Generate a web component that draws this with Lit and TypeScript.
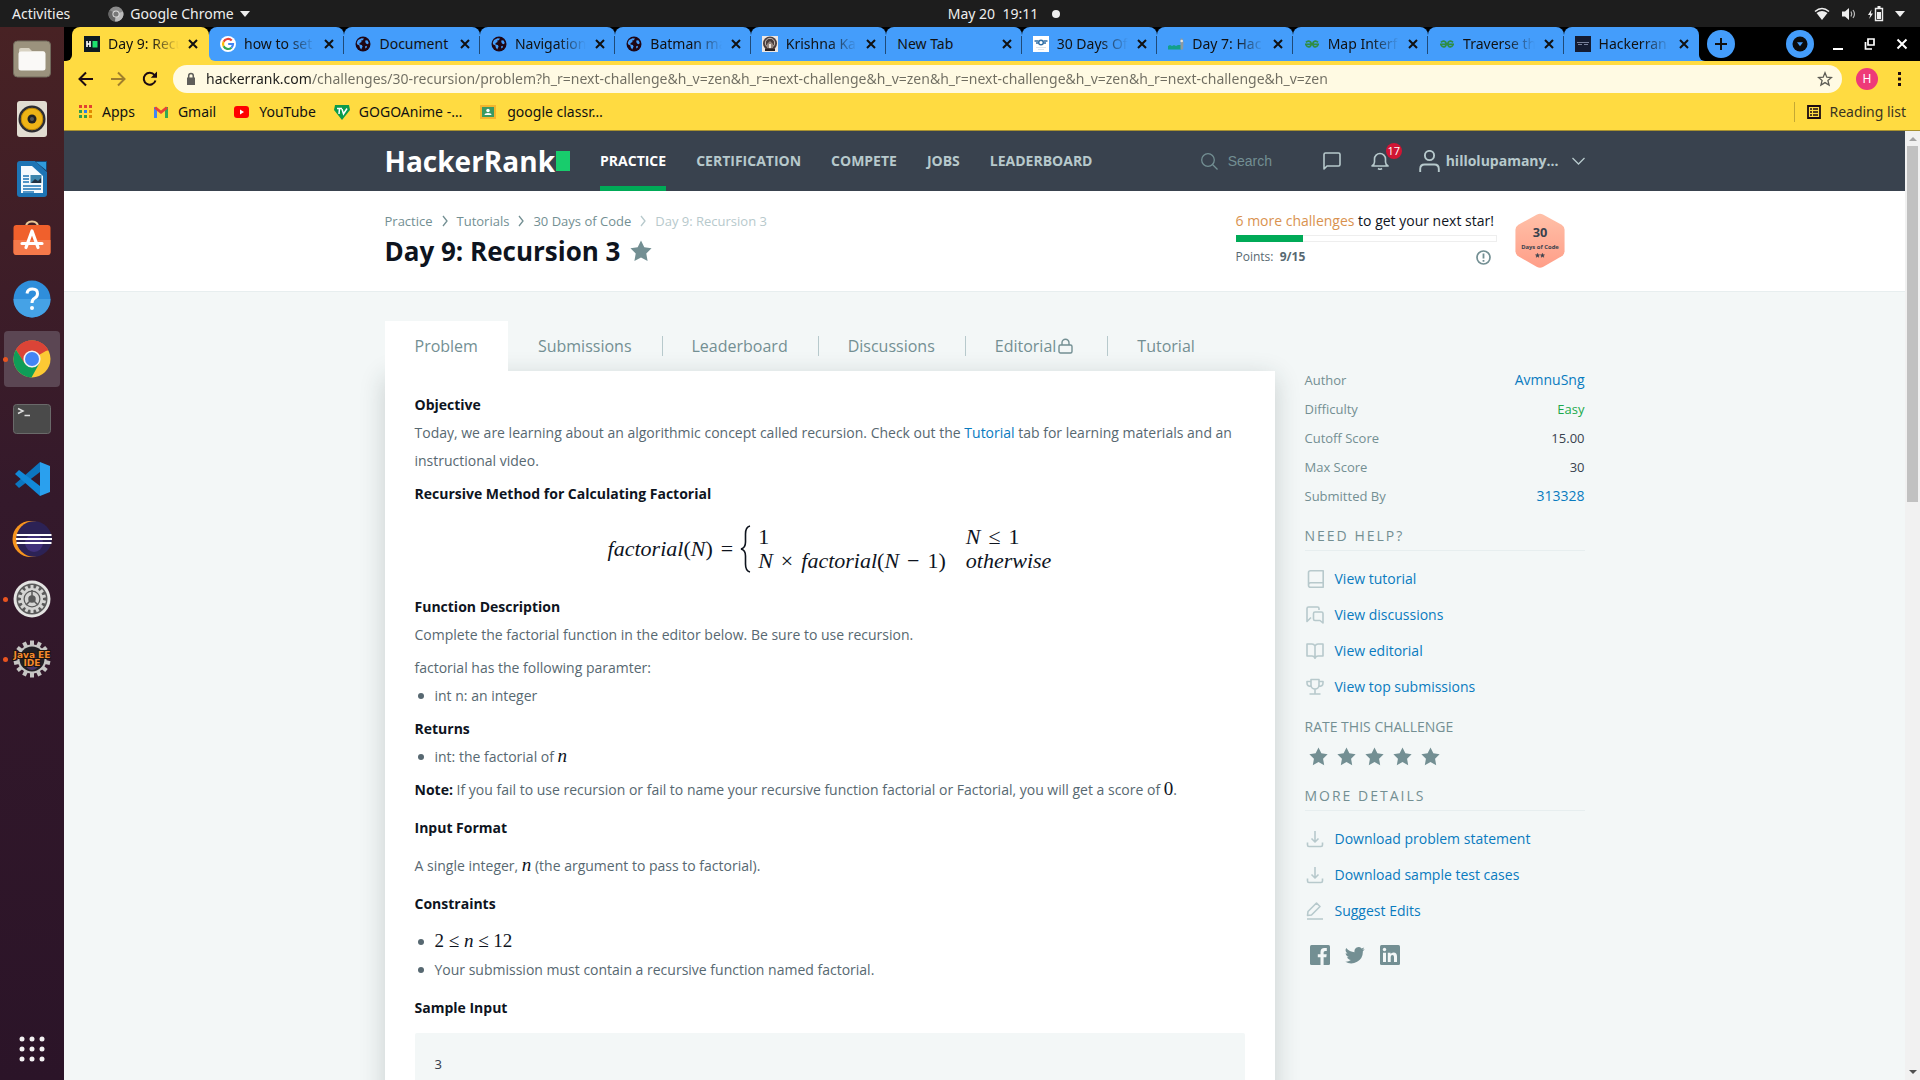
import { LitElement, html, css, svg, nothing } from "lit";
import { customElement } from "lit/decorators.js";
import { classMap } from "lit/directives/class-map.js";

const sans = css`"Open Sans", "Noto Sans", sans-serif`;
const shell = css`"Noto Sans", "Open Sans", sans-serif`;

const reset = css`
  * { box-sizing: border-box; }
  button { font: inherit; color: inherit; background: none; border: 0; padding: 0; margin: 0; display: flex; align-items: center; justify-content: center; }
  a { color: inherit; text-decoration: none; }
  h1, h2, h3, p, ul, ol, dl, dd, dt, pre { margin: 0; padding: 0; font-weight: inherit; font-size: inherit; }
  ul, ol { list-style: none; }
  svg { display: block; flex: none; }
`;

/* ---------- favicons ---------- */
const globe = svg`<circle cx="8" cy="8" r="7.500" fill="#1f0614"/><path d="M3 4 6.500 2.200 9 2.600 7.800 4.200 6.200 4.600 6.600 6 4.600 7 4.400 8.600 6.800 9 7.600 10.600 6.200 13.400 4.800 11.400 4.400 9.600 2 8.200 1.800 6.400zM10.600 4.200 12.600 4.400 13.800 7 12.600 8.200 11 7.400 10.200 5.800zM10 10.400 11.600 9.800 12 11.200 10.400 12.600z" fill="#449dfb"/>`;
const geeks = svg`<g fill="none" stroke="#2f8d46" stroke-width="1.700"><path d="M2 6.400Q4.200 4 6.700 6.200 8 9 6 10.600 3.300 11.700 2 9"/><path d="M14 6.400Q11.800 4 9.300 6.200 8 9 10 10.600q2.700 1.100 4-1.600"/><path d="M1 8.300h14"/></g>`;
const favicons: Record<string, unknown> = {
  hr: svg`<path d="M0 0h16v16H0z" fill="#0e1a22"/><path d="M3 5v6M6 5v6M3 8h3" stroke="#fff" stroke-width="1.600"/><path d="M8.500 5h5v6.500h-5z" fill="#1de26f"/>`,
  google: svg`<circle cx="8" cy="8" r="8" fill="#fff"/><g fill="none" stroke-width="2.200"><path d="M11.700 4.500A5 5 0 0 0 3.600 5.700" stroke="#ea4335"/><path d="M3.600 5.700a5 5 0 0 0 0 4.600" stroke="#fbbc05"/><path d="M3.600 10.300a5 5 0 0 0 7.800 1.400" stroke="#34a853"/><path d="M11.400 11.700A5 5 0 0 0 13 8H8.200" stroke="#4285f4"/></g>`,
  globe,
  temple: svg`<path d="M0 0h16v16H0z" fill="#eee7e2"/><circle cx="8" cy="7.500" r="7" fill="#4a3d3b"/><circle cx="8" cy="7" r="4.700" fill="none" stroke="#c9beb6"/><path d="M5 12V8l3-3 3 3v4z" fill="#94867e"/><path d="M7 8h2v4H7z" fill="#e9e1da"/><path d="M3 13h10v2H3z" fill="#2b2322"/>`,
  days: svg`<path d="M0 0h16v16H0z" fill="#fff"/><path d="M1.500 5h4M10.500 5h4M3 7h2.600M10.400 7H13" stroke="#2f6ea5" stroke-width="1.300"/><circle cx="8" cy="6.500" r="2.300" fill="none" stroke="#2f6ea5" stroke-width="1.400"/><path d="M3 11.500h10M5 13.500h6" stroke="#dde5eb"/>`,
  bars: svg`<path d="M0 10l2-1 2 1 2-1 2 1 2-1h3v4.500H0z" fill="#12a08a"/><path d="M12.500 2.500h2l1 4-.5 7h-2.500z" fill="#8c9aa0"/><circle cx="13.700" cy="5" r="1.300" fill="#e8e4dd"/>`,
  geeks,
  dark: svg`<path d="M0 0h16v16H0z" fill="#151c31"/><path d="M2 6.500h12M3 8.500h4M9 8.500h4" stroke="#78809a"/>`,
};
const fav = (k: string) => svg`<svg width="16" height="16" viewBox="0 0 16 16" aria-hidden="true">${favicons[k]}</svg>`;

interface Tab { title: string; icon?: string; fade?: boolean; active?: boolean; }
const tabs: Tab[] = [
  { title: "Day 9: Recu", icon: "hr", fade: true, active: true },
  { title: "how to set", icon: "google", fade: true },
  { title: "Document", icon: "globe" },
  { title: "Navigation", icon: "globe", fade: true },
  { title: "Batman ma", icon: "globe", fade: true },
  { title: "Krishna Ka", icon: "temple", fade: true },
  { title: "New Tab" },
  { title: "30 Days Of", icon: "days", fade: true },
  { title: "Day 7: Hac", icon: "bars", fade: true },
  { title: "Map Interf", icon: "geeks", fade: true },
  { title: "Traverse th", icon: "geeks", fade: true },
  { title: "Hackerran", icon: "dark", fade: true },
];

/* ---------- desktop top bar ---------- */
@customElement("system-bar")
class SystemBar extends LitElement {
  static styles = [reset, css`
    :host { display: block; font: 14px/27px ${shell}; color: #eee; background: #1d1d1d; }
    .bar { display: grid; grid-template-columns: 1fr auto 1fr; height: 27px; align-items: center; }
    .left { display: flex; gap: 38px; padding-left: 12px; }
    .app { display: flex; align-items: center; gap: 6px; }
    .date { display: flex; align-items: center; gap: 14px; padding-left: 88px; white-space: pre; }
    .dot { width: 8px; height: 8px; border-radius: 50%; background: #eee; }
    .tray { display: flex; justify-content: flex-end; gap: 11px; padding-right: 15px; align-items: center; }
  `];
  render() {
    return html`<div class="bar">
      <div class="left">
        <button>Activities</button>
        <button class="app">
          <svg width="16" height="18" viewBox="0 0 16 18"><circle cx="8" cy="9" r="7.500" fill="#8b8b8b"/><path d="M8 9 1.500 5A7.500 7.500 0 0 0 7 16.500z" fill="#666"/><path d="M8 9l-1 7.500A7.500 7.500 0 0 0 15 6.500z" fill="#bbb"/><circle cx="8" cy="9" r="3.600" fill="#ddd"/><circle cx="8" cy="9" r="2.600" fill="#777"/></svg>
          <span>Google Chrome</span>
          <svg width="10" height="6" viewBox="0 0 10 6"><path d="M0 0h10L5 6z" fill="#eee"/></svg>
        </button>
      </div>
      <div class="date"><span>May 20  19:11</span><span class="dot"></span></div>
      <div class="tray">
        <svg width="16" height="14" viewBox="0 0 16 14"><path d="M1 4.500Q8-1.500 15 4.500" fill="none" stroke="#eee" stroke-width="1.600"/><path d="M2.500 6Q8 1.800 13.500 6L8 13z" fill="#eee"/></svg>
        <svg width="16" height="14" viewBox="0 0 16 14"><path d="M1 4.500h3L8 1v12L4 9.500H1z" fill="#eee"/><path d="M10 4.500q1.500 2.500 0 5M12 3q3 4 0 8" fill="none" stroke="#bbb" stroke-width="1.200"/></svg>
        <svg width="16" height="16" viewBox="0 0 16 16"><path d="M3.500 3.500 0 9h2.200L1.200 13 5 7.500H2.800z" fill="#eee"/><path d="M7.500 2.500h7v12h-7z" fill="none" stroke="#eee" stroke-width="1.400"/><path d="M9 6h4v7H9zM9.500 0h3v2h-3z" fill="#eee"/></svg>
        <svg width="10" height="6" viewBox="0 0 10 6"><path d="M0 0h10L5 6z" fill="#eee"/></svg>
      </div>
    </div>`;
  }
}

/* ---------- launcher ---------- */
const gear = (r: number, n: number, w: number, color: string) => {
  const teeth = [];
  for (let i = 0; i < n; i++) {
    teeth.push(svg`<rect x=${20 - w / 2} y=${20 - r} width=${w} height="6" fill=${color} transform=${`rotate(${(360 / n) * i} 20 20)`}/>`);
  }
  return teeth;
};
const launchers: { name: string; art: unknown; running?: boolean; active?: boolean }[] = [
  { name: "Files", art: svg`<rect x="1.500" y="2" width="37" height="36" rx="4" fill="#9b927d"/><rect x="1.500" y="2" width="37" height="36" rx="4" fill="none" stroke="#716a5c"/><path d="M7 11q0-2 2-2h8l3 3h11q2 0 2 2v5H7z" fill="#d8d2c2"/><rect x="6.500" y="12.500" width="27" height="19" rx="2.500" fill="#faf9f7"/>` },
  { name: "Rhythmbox", art: svg`<rect x="5" y="2" width="30" height="36" rx="3" fill="#e2ddd2"/><circle cx="20" cy="20" r="13.500" fill="#2d2d33"/><circle cx="20" cy="20" r="10.800" fill="#efb416"/><circle cx="20" cy="20" r="10.800" fill="none" stroke="#c08a08"/><circle cx="20" cy="20" r="4.500" fill="#222"/><circle cx="20" cy="20" r="2" fill="#555"/>` },
  { name: "Writer", art: svg`<path d="M8 2h15l12 11v22q0 3-3 3H8q-3 0-3-3V5q0-3 3-3z" fill="#1d74b4"/><path d="M9 7h11l11 10v17H9z" fill="#f5fafd"/><path d="M23 2h12v11z" fill="#124a7a"/><path d="M24 3h10v8z" fill="#2f9bdc"/><path d="M11 17h6M11 20h6M11 23h6M11 27h18M11 30h18M11 33h11" stroke="#1d74b4" stroke-width="1.500"/><path d="M18.500 16h11v8h-11z" fill="#3c86ad"/><path d="M19 24l4-4 3 2 3-3v5z" fill="#234"/>` },
  { name: "Software", art: svg`<path d="M14 8q0-5.500 6-5.500T26 8" fill="none" stroke="#e9c796" stroke-width="2"/><rect x="1.500" y="6" width="37" height="30" rx="3" fill="#f0602c"/><path d="M1.500 21h37v12q0 3-3 3h-31q-3 0-3-3z" fill="#f5794a"/><path d="M14 28.500 20 12l6 16.500M10 24.500h20" fill="none" stroke="#fff" stroke-width="3.200" stroke-linecap="round" stroke-linejoin="round"/>` },
  { name: "Help", art: svg`<circle cx="20" cy="20" r="18.500" fill="#2f8edb"/><path d="M1.500 20a18.500 18.500 0 0 0 37 0z" fill="#45a2e6"/><path d="M15 14.500q.5-4.500 5.500-4.500t5 4.700q0 3-3 4.600-2.500 1.500-2.500 4.700" fill="none" stroke="#fff" stroke-width="3"/><circle cx="20" cy="29" r="2" fill="#fff"/>` },
  { name: "Chrome", running: true, active: true, art: svg`<circle cx="20" cy="20" r="18.500" fill="#fcc934"/><path d="M20 20 4 10.700a18.500 18.500 0 0 1 32 0z" fill="#db4437"/><path d="M20 11.500h16.500A18.500 18.500 0 0 0 4 10.700L12 24z" fill="#db4437"/><path d="M4 10.700A18.500 18.500 0 0 0 19.500 38.500L27.400 24.300 20 28.500 12.600 24.300z" fill="#0f9d58"/><circle cx="20" cy="20" r="8.600" fill="#f4f4f4"/><circle cx="20" cy="20" r="7" fill="#4285f4"/>` },
  { name: "Terminal", art: svg`<rect x="1.500" y="5.500" width="37" height="29" rx="3" fill="#4a4a4a" stroke="#6a6a6a"/><path d="M6 9.500l5 2.500-5 2.500M12.500 16.500H18" fill="none" stroke="#ddd" stroke-width="1.500"/>` },
  { name: "Code", art: svg`<path d="M28 3l10 4v26l-10 4z" fill="#2aa0ee"/><path d="M28 3 3 25l4 4L28 13z" fill="#0c76c0"/><path d="M28 37 3 15l4-4 21 16z" fill="#1289d8"/>` },
  { name: "Eclipse", art: svg`<circle cx="18.500" cy="20" r="18" fill="#f7941e"/><circle cx="22" cy="20" r="17.800" fill="#2c2255"/><circle cx="22" cy="24" r="9" fill="#40307a"/><path d="M4.500 16h35M4 20h36M4.500 24h35" stroke="#fff" stroke-width="1.800"/>` },
  { name: "Settings", running: true, art: svg`<circle cx="20" cy="20" r="18.500" fill="#e4e4e2"/><circle cx="20" cy="20" r="15.500" fill="#5a5a5a"/>${gear(14, 14, 3, "#d5d5d3")}<circle cx="20" cy="20" r="11" fill="#d5d5d3"/><circle cx="20" cy="20" r="8.500" fill="#5a5a5a"/><circle cx="20" cy="20" r="5.500" fill="none" stroke="#d5d5d3" stroke-width="3.500"/><path d="M20 20l-6 6M20 20V11M20 20l6 6" stroke="#5a5a5a" stroke-width="1.500"/>` },
  { name: "Java EE IDE", running: true, art: svg`${gear(18.500, 14, 4, "#c6c6c4")}<circle cx="20" cy="20" r="14.500" fill="#c6c6c4"/><circle cx="20" cy="20" r="12.500" fill="#222025"/><circle cx="20" cy="24" r="7" fill="#463463"/><g fill="#f58a2c" stroke="#1b1512" stroke-width="2" paint-order="stroke" font-family="DejaVu Sans, sans-serif" font-weight="700" font-size="9" text-anchor="middle"><text x="20" y="19">Java EE</text><text x="20" y="27">IDE</text></g>` },
];

@customElement("app-dock")
class AppDock extends LitElement {
  static styles = [reset, css`
    :host { display: flex; flex-direction: column; width: 64px; flex: none; background: linear-gradient(#482224, #34192b 45%, #2b1428); padding: 4px 4px 18px; }
    .list { display: flex; flex-direction: column; gap: 4px; }
    .item { width: 56px; height: 56px; border-radius: 4px; position: relative; }
    .item.active { background: #5b4653; }
    .run { position: absolute; left: -1px; top: 26px; width: 5px; height: 5px; border-radius: 50%; background: #e95420; }
    .apps { margin: auto auto 0; }
  `];
  render() {
    const dots = [2, 12, 22].flatMap((y) => [2, 12, 22].map((x) => svg`<circle cx=${x + 1} cy=${y + 1} r="2.500" fill="#f2f0f1"/>`));
    return html`
      <nav class="list">
        ${launchers.map((l) => html`<button class=${classMap({ item: true, active: !!l.active })} aria-label=${l.name}>
          <svg width="40" height="40" viewBox="0 0 40 40">${l.art}</svg>
          ${l.running ? html`<span class="run"></span>` : nothing}
        </button>`)}
      </nav>
      <button class="apps" aria-label="Show applications"><svg width="26" height="26" viewBox="0 0 26 26">${dots}</svg></button>`;
  }
}

/* ---------- browser frame ---------- */
@customElement("browser-chrome")
class BrowserChrome extends LitElement {
  static styles = [reset, css`
    :host { display: block; font: 14px/20px ${shell}; color: #111; background: #ffdb41; border-bottom: 1px solid #a8912f; }
    .strip { display: flex; height: 34px; background: linear-gradient(#000 50%, #ffdb41 50%); }
    .lead { width: 8px; background: #000; border-bottom-right-radius: 6px; }
    .tab { flex: 1 1 0; min-width: 0; display: flex; align-items: center; gap: 8px; padding: 0 9px 0 11px; background: #449dfb; border-radius: 8px 8px 0 0; position: relative; }
    .tab.active { background: #ffdb41; flex: 0 0 137px; padding: 0 10px 0 12px; }
    .tab.active + .tab { border-bottom-left-radius: 6px; }
    .tab.rule::after { content: ""; position: absolute; right: 0; top: 9px; height: 18px; width: 1px; background: #1f4a78; }
    .title { flex: 1; min-width: 0; overflow: hidden; white-space: nowrap; }
    .fade { -webkit-mask-image: linear-gradient(90deg, #000 60%, transparent); mask-image: linear-gradient(90deg, #000 60%, transparent); }
    .end { width: 221px; background: #449dfb; display: flex; }
    .controls { flex: 1; background: #000; border-bottom-left-radius: 6px; display: flex; align-items: center; padding: 0 10px 0 8px; }
    .round { width: 28px; height: 28px; border-radius: 50%; background: #449dfb; }
    .window { display: flex; gap: 16px; margin-left: auto; align-items: center; }
    .toolbar { display: flex; align-items: center; gap: 14px; height: 36px; padding: 0 14px 0 13px; }
    .box { flex: 1; display: flex; align-items: center; gap: 8px; height: 28px; border-radius: 14px; background: #fffae3; padding: 0 9px 0 11px; }
    .url { flex: 1; min-width: 0; border: 0; padding: 0; outline: 0; font: inherit; color: transparent; background: linear-gradient(90deg, #1d1d1b 105px, #6f6d61 105px); -webkit-background-clip: text; background-clip: text; }
    .avatar { width: 22px; height: 22px; border-radius: 50%; background: #ee3a78; color: #fff; font-size: 12px; }
    .marks { display: flex; align-items: center; gap: 18px; height: 33px; padding: 0 14px 4px 15px; }
    .marks a { display: flex; align-items: center; gap: 9px; }
    .marks .wide { gap: 11px; }
    .reading { margin-left: auto; border-left: 1px solid #c4a834; padding-left: 12px; gap: 8px; color: #3a3420; }
  `];
  render() {
    return html`
      <div class="strip">
        <div class="lead"></div>
        ${tabs.map((t, i) => html`<div class=${classMap({ tab: true, active: !!t.active, rule: i > 0 && i < tabs.length - 1 })}>
          ${t.icon ? fav(t.icon) : nothing}
          <a href="#" class=${classMap({ title: true, fade: !!t.fade })}>${t.title}</a>
          <button aria-label="Close tab"><svg width="12" height="12" viewBox="0 0 12 12"><path d="M2 2l8 8M10 2l-8 8" stroke="#111" stroke-width="2"/></svg></button>
        </div>`)}
        <div class="end"><div class="controls">
          <button class="round" aria-label="New tab"><svg width="14" height="14" viewBox="0 0 14 14"><path d="M7 1v12M1 7h12" stroke="#111" stroke-width="2"/></svg></button>
          <div class="window">
            <button class="round" aria-label="Search tabs"><svg width="16" height="16" viewBox="0 0 16 16"><circle cx="8" cy="8" r="7.500" fill="#0b0b0b"/><path d="M5 6.300h6L8 10.300z" fill="#449dfb"/></svg></button>
            <button aria-label="Minimize"><svg width="16" height="12" viewBox="0 0 16 12"><path d="M3 10h10v2H3z" fill="#fff"/></svg></button>
            <button aria-label="Restore"><svg width="16" height="12" viewBox="0 0 16 12"><path d="M6 1h6v6H6zM3.500 4v7H10" fill="none" stroke="#fff" stroke-width="1.700"/></svg></button>
            <button aria-label="Close"><svg width="16" height="12" viewBox="0 0 16 12"><path d="M3.500 1.500l9 9M12.500 1.500l-9 9" stroke="#fff" stroke-width="2"/></svg></button>
          </div>
        </div></div>
      </div>
      <div class="toolbar">
        <button aria-label="Back"><svg width="18" height="18" viewBox="0 0 18 18"><path d="M16 9H3M9 2.500 2.500 9 9 15.500" fill="none" stroke="#1c0a12" stroke-width="2"/></svg></button>
        <button aria-label="Forward"><svg width="18" height="18" viewBox="0 0 18 18"><path d="M2 9h13M9 2.500 15.500 9 9 15.500" fill="none" stroke="#a07f2c" stroke-width="2"/></svg></button>
        <button aria-label="Reload"><svg width="18" height="18" viewBox="0 0 18 18"><path d="M14.500 10.500A6 6 0 1 1 13.500 5" fill="none" stroke="#1c0a12" stroke-width="2"/><path d="M16 1.500v6.200h-6.200z" fill="#1c0a12"/></svg></button>
        <div class="box">
          <svg width="14" height="14" viewBox="0 0 14 14"><path d="M3 5.500h8V13H3z" fill="#5f5e5a"/><path d="M4.700 6V3.700a2.300 2.300 0 0 1 4.600 0V6" fill="none" stroke="#5f5e5a" stroke-width="1.500"/></svg>
          <input class="url" aria-label="Address" value="hackerrank.com/challenges/30-recursion/problem?h_r=next-challenge&h_v=zen&h_r=next-challenge&h_v=zen&h_r=next-challenge&h_v=zen&h_r=next-challenge&h_v=zen">
          <button aria-label="Bookmark"><svg width="16" height="16" viewBox="0 0 16 16"><path d="M8 1.800l1.800 4.400 4.700.3-3.600 3 1.200 4.600L8 11.600l-4.100 2.500 1.200-4.600-3.600-3 4.700-.3z" fill="none" stroke="#5d5c55" stroke-width="1.300"/></svg></button>
        </div>
        <button class="avatar">H</button>
        <button aria-label="Menu"><svg width="14" height="16" viewBox="0 0 14 16"><path d="M6 1h3v3H6zM6 6.500h3v3H6zM6 12h3v3H6z" fill="#1c0a12"/></svg></button>
      </div>
      <div class="marks">
        <a href="#"><svg width="14" height="14" viewBox="0 0 14 14"><path d="M0 0h3v3H0zM5 0h3v3H5zM10 0h3v3h-3z" fill="#e2432f"/><path d="M0 5h3v3H0z" fill="#2f9d4c"/><path d="M5 5h3v3H5z" fill="#2b7de9"/><path d="M10 5h3v3h-3z" fill="#e08a00"/><path d="M0 10h3v3H0zM5 10h3v3H5z" fill="#2f9d4c"/><path d="M10 10h3v3h-3z" fill="#e08a00"/></svg>Apps</a>
        <a href="#"><svg width="16" height="12" viewBox="0 0 16 12"><path d="M1 1h3v11H1z" fill="#4285f4"/><path d="M12 1h3v11h-3z" fill="#34a853"/><path d="M1 2.500 3 .500l5 4 5-4 2 2-7 5.500z" fill="#ea4335"/></svg>Gmail</a>
        <a href="#"><svg width="16" height="12" viewBox="0 0 16 12"><rect width="15" height="12" rx="3" fill="#f00"/><path d="M6 3.500v5L10 6z" fill="#fff"/></svg>YouTube</a>
        <a href="#"><svg width="16" height="16" viewBox="0 0 16 16"><path d="M1 1h14l1 5-8 10-8-10z" fill="#0a9b4c"/><path d="M3 4.500h5M5.500 4.500 5 10M8 5l1.500 5L13 4.500" fill="none" stroke="#fff" stroke-width="1.500"/></svg>GOGOAnime -…</a>
        <a class="wide" href="#"><svg width="16" height="16" viewBox="0 0 16 16"><path d="M0 1h16v14H0z" fill="#f2b62d"/><path d="M2 3h12v10H2z" fill="#3a9a63"/><circle cx="8" cy="6.500" r="1.700" fill="#fff"/><path d="M4.500 11q0-2 3.500-2t3.500 2z" fill="#fff"/></svg>google classr…</a>
        <button class="reading"><svg width="14" height="14" viewBox="0 0 14 14"><path d="M1 1h12v12H1z" fill="none" stroke="#1c0a12" stroke-width="1.800"/><path d="M3 4h2M6 4h5M3 7h2M6 7h5M3 10h2M6 10h5" stroke="#1c0a12" stroke-width="1.500"/></svg>Reading list</button>
      </div>`;
  }
}

/* ---------- HackerRank page ---------- */
const star = (s: number) => svg`<svg width=${s} height=${s} viewBox="0 0 20 20"><path d="M10 .500l3 6.200 6.600.9-4.800 4.700 1.200 6.900L10 15.900l-6 3.300 1.200-6.900L.400 7.600 7 6.700z" fill="#738f93"/></svg>`;

@customElement("site-nav")
class SiteNav extends LitElement {
  static styles = [reset, css`
    :host { display: block; background: #39424e; color: #b7c9cc; font: 700 14px/20px ${sans}; }
    .wrap { width: 1200px; max-width: 100%; margin: 0 auto; display: flex; height: 60px; align-items: center; gap: 30px; }
    .logo { display: flex; align-items: center; gap: 1px; font: 700 28px/24px ${sans}; color: #fff; }
    .cursor { width: 14px; height: 20px; background: #18cc6c; }
    .links { display: flex; gap: 30px; align-self: stretch; }
    .links a { display: flex; align-items: center; border-bottom: 5px solid transparent; padding-top: 5px; }
    .links .on { color: #fff; border-color: #00aa57; }
    .tools { margin-left: auto; display: flex; align-items: center; gap: 30px; }
    .search { display: flex; align-items: center; gap: 10px; }
    .search input { width: 65px; border: 0; padding: 0; background: none; font: 14px/20px "Liberation Sans", sans-serif; color: #738f93; }
    .search input::placeholder { color: #738f93; opacity: 1; }
    .bell { position: relative; }
    .count { position: absolute; left: 15px; top: -9px; width: 16px; height: 16px; border-radius: 50%; background: #d11534; color: #fff; font: 11px/16px ${sans}; text-align: center; }
    .user { gap: 6px; }
    .user .chev { margin-left: 7px; }
  `];
  render() {
    const stroke = "#b7c9cc";
    return html`<nav class="wrap">
      <a class="logo" href="#"><span>HackerRank</span><span class="cursor"></span></a>
      <div class="links">
        ${["PRACTICE", "CERTIFICATION", "COMPETE", "JOBS", "LEADERBOARD"].map((t, i) => html`<a href="#" class=${classMap({ on: i === 0 })}>${t}</a>`)}
      </div>
      <div class="tools">
        <label class="search"><svg width="17" height="17" viewBox="0 0 17 17"><circle cx="7" cy="7" r="6.300" fill="none" stroke="#738f93" stroke-width="1.300"/><path d="M11.500 11.500l5 5" stroke="#738f93" stroke-width="1.300"/></svg><input type="text" placeholder="Search" aria-label="Search"></label>
        <button aria-label="Messages"><svg width="18" height="18" viewBox="0 0 18 18"><path d="M1 17V2.500Q1 1 2.500 1h13Q17 1 17 2.500v10q0 1.500-1.500 1.500H4z" fill="none" stroke=${stroke} stroke-width="1.600" stroke-linejoin="round"/></svg></button>
        <button class="bell" aria-label="Notifications"><svg width="18" height="18" viewBox="0 0 18 18"><path d="M1 14q2.500-1.500 2.500-4V7a5.500 5.500 0 0 1 11 0v3q0 2.500 2.500 4zM7 16.500q2 1.500 4 0" fill="none" stroke=${stroke} stroke-width="1.600" stroke-linejoin="round"/></svg><span class="count">17</span></button>
        <button class="user"><svg width="21" height="22" viewBox="0 0 21 22"><circle cx="10.500" cy="5.500" r="4.600" fill="none" stroke=${stroke} stroke-width="1.900"/><path d="M1.200 22v-3q0-4.500 4.500-4.500h9.600q4.500 0 4.500 4.500v3" fill="none" stroke=${stroke} stroke-width="1.900"/></svg><span>hillolupamany...</span><svg class="chev" width="13" height="8" viewBox="0 0 13 8"><path d="M.500 1l6 6 6-6" fill="none" stroke=${stroke} stroke-width="1.300"/></svg></button>
      </div>
    </nav>`;
  }
}

@customElement("challenge-header")
class ChallengeHeader extends LitElement {
  static styles = [reset, css`
    :host { display: block; background: #fff; border-bottom: 1px solid #e7eeef; font: 14px/20px ${sans}; color: #0e141e; }
    .wrap { width: 1200px; max-width: 100%; margin: 0 auto; display: flex; justify-content: space-between; height: 100px; padding: 20px 20px 0 0; }
    .crumbs { display: flex; align-items: center; gap: 8px; font-size: 13px; color: #738f93; }
    .crumbs .last { color: #b7c9cc; }
    .head { display: flex; align-items: center; gap: 10px; }
    h1 { font: 700 26px/40px ${sans}; }
    .status { display: flex; gap: 18px; }
    .progress { width: 261px; }
    .more { color: #d9924f; }
    .track { height: 7px; border: 1px solid #eee; margin: 4px 0 5px; display: flex; }
    .fill { background: #00aa57; margin: -1px 0 -1px -1px; }
    .points { display: flex; align-items: center; justify-content: space-between; padding-right: 6px; font-size: 12px; color: #576871; }
    .badge { padding-top: 1px; }
  `];
  render() {
    const arrow = (c: string) => svg`<svg width="8" height="12" viewBox="0 0 8 12"><path d="M2 1l4 5-4 5" fill="none" stroke=${c} stroke-width="1.300"/></svg>`;
    return html`<div class="wrap">
      <div>
        <div class="crumbs"><a href="#">Practice</a>${arrow("#738f93")}<a href="#">Tutorials</a>${arrow("#738f93")}<a href="#">30 Days of Code</a>${arrow("#b7c9cc")}<span class="last">Day 9: Recursion 3</span></div>
        <div class="head"><h1>Day 9: Recursion 3</h1><button aria-label="Bookmark challenge">${star(22)}</button></div>
      </div>
      <div class="status">
        <div class="progress">
          <div><span class="more">6 more challenges</span> to get your next star!</div>
          <div class="track"><div class="fill" style="width: 26%"></div></div>
          <div class="points"><span>Points: &nbsp;<b>9/15</b></span>
            <svg width="15" height="15" viewBox="0 0 15 15"><circle cx="7.500" cy="7.500" r="6.500" fill="none" stroke="#738f93" stroke-width="1.700"/><path d="M7.500 3.500v5M7.500 10v1.800" stroke="#738f93" stroke-width="1.800"/></svg></div>
        </div>
        <svg class="badge" width="50" height="58" viewBox="0 0 50 58">
          <defs><linearGradient id="coral" x2="0" y2="1"><stop stop-color="#ffc0a8"/><stop offset="1" stop-color="#ff9e88"/></linearGradient></defs>
          <path d="M22 2.500q3-1.500 6 0l19 10.500q3 2 3 5v22q0 3-3 5L28 56q-3 1.500-6 0L3 45q-3-2-3-5V18q0-3 3-5z" fill="url(#coral)"/>
          <g text-anchor="middle" font-family="Open Sans, sans-serif" font-weight="700" fill="#39424e"><text x="25" y="25" font-size="13">30</text><text x="25" y="38" font-size="6">Days of Code</text></g>
          <path d="M22.500 42l.6 1.400 1.500.2-1.100 1 .3 1.500-1.300-.8-1.300.8.3-1.500-1.100-1 1.500-.2zM27.500 42l.6 1.400 1.500.2-1.100 1 .3 1.500-1.300-.8-1.300.8.3-1.500-1.100-1 1.500-.2z" fill="#39424e" stroke="#39424e" stroke-width=".5"/>
        </svg>
      </div>
    </div>`;
  }
}

@customElement("problem-statement")
class ProblemStatement extends LitElement {
  static styles = [reset, css`
    :host { display: block; flex: 1; min-width: 0; font: 14px/28px ${sans}; color: #576871; }
    .tabs { display: flex; align-items: center; height: 50px; position: relative; z-index: 1; font-size: 16px; line-height: 20px; color: #738f93; }
    .tabs a { padding: 0 30px 0 29px; border-right: 1px solid #b7c9cc; display: flex; align-items: center; gap: 2px; }
    .tabs li:nth-child(1) a { padding: 15px 30px; background: #fff; border: 0; }
    .tabs li:nth-child(2) a { padding-left: 30px; }
    .tabs li:nth-child(5) a { padding-right: 34px; }
    .tabs li:last-child a { border: 0; }
    .card { position: relative; background: #fff; padding: 20px 30px 60px; box-shadow: 0 6px 24px rgba(30, 50, 50, 0.2); clip-path: inset(-20px -40px 0 -40px); }
    h2, b { font-weight: 700; color: #0e141e; }
    .group { margin-bottom: 5px; }
    .wide { margin-top: 10px; }
    .link { color: #097bbf; }
    .dots li { padding-left: 20px; position: relative; }
    .dots li::before { content: ""; position: absolute; left: 3px; top: 11px; width: 6px; height: 6px; border-radius: 50%; background: #576871; }
    .math { font: 19px/20px "Liberation Serif", serif; color: #0e141e; }
    i.math { font-style: italic; }
    .formula { display: flex; align-items: center; justify-content: center; gap: 7px; height: 80px; padding-top: 2px; font: 22px/24px "Liberation Serif", serif; color: #0e141e; }
    .lhs { display: flex; gap: 8px; }
    .cases { display: grid; grid-template-columns: auto auto; column-gap: 20px; }
    .row { display: flex; gap: 8px; }
    pre { margin-top: 11px; background: #f3f7f7; border-radius: 2px; padding: 21px 20px 20px; font: 13px/20px "Noto Sans", ${sans}; color: #39424e; }
  `];
  render() {
    return html`
      <ul class="tabs">
        <li><a href="#">Problem</a></li><li><a href="#">Submissions</a></li><li><a href="#">Leaderboard</a></li><li><a href="#">Discussions</a></li>
        <li><a href="#">Editorial<svg width="15" height="16" viewBox="0 0 15 16"><rect x="1" y="7" width="13" height="8" rx="1.500" fill="none" stroke="#738f93" stroke-width="1.400"/><path d="M4 7V4.700a3.500 3.500 0 0 1 7 0V7" fill="none" stroke="#738f93" stroke-width="1.400"/></svg></a></li>
        <li><a href="#">Tutorial</a></li>
      </ul>
      <div class="card">
        <div class="group"><h2>Objective</h2><p>Today, we are learning about an algorithmic concept called recursion. Check out the <a class="link" href="#">Tutorial</a> tab for learning materials and an instructional video.</p></div>
        <div class="group"><h2>Recursive Method for Calculating Factorial</h2>
          <div class="formula" role="math">
            <div class="lhs"><span><i>factorial</i>(<i>N</i>)</span><span>=</span></div>
            <svg width="11" height="48" viewBox="0 0 11 48"><path d="M10 1Q5.500 2 5.500 9v8q0 6-4.500 7 4.500 1 4.500 7v8q0 7 4.500 8" fill="none" stroke="#0e141e" stroke-width="1.600"/></svg>
            <div class="cases">
              <span>1</span><span class="row"><i>N</i><span>≤</span><span>1</span></span>
              <span class="row"><i>N</i><span>×</span><span><i>factorial</i>(<i>N</i></span><span>−</span><span>1)</span></span><i>otherwise</i>
            </div>
          </div></div>
        <div class="group"><h2>Function Description</h2><p>Complete the factorial function in the editor below. Be sure to use recursion.</p></div>
        <div class="group"><p>factorial has the following paramter:</p><ul class="dots"><li>int n: an integer</li></ul></div>
        <div class="group"><h2>Returns</h2><ul class="dots"><li>int: the factorial of <i class="math">n</i></li></ul></div>
        <p><b>Note:</b> If you fail to use recursion or fail to name your recursive function factorial or Factorial, you will get a score of <span class="math">0</span>.</p>
        <h2 class="wide">Input Format</h2>
        <p class="wide">A single integer, <i class="math">n</i> (the argument to pass to factorial).</p>
        <h2 class="wide">Constraints</h2>
        <ul class="dots wide"><li><span class="math">2 ≤ <i>n</i> ≤ 12</span></li><li>Your submission must contain a recursive function named factorial.</li></ul>
        <h2 class="wide">Sample Input</h2>
        <pre>3</pre>
      </div>`;
  }
}

const sideIcons: Record<string, unknown> = {
  book: svg`<path d="M4.500 .800h12.700v16.400H4.500q-2 0-2-2V2.800q0-2 2-2zM2.500 15.200q0-2.400 2-2.400h12.700"/>`,
  chat: svg`<path d="M5 11.500 1 15.500V2.500Q1 1 2.500 1h9Q13 1 13 2.500V4"/><path d="M17 17l-3-2.500H9q-1.500 0-1.500-1.500V7.500Q7.500 6 9 6h6.500Q17 6 17 7.500z"/>`,
  open: svg`<path d="M9 4q-1-2-3-2H1v12h5q2 0 3 2 1-2 3-2h5V2h-5Q10 2 9 4zM9 4v13"/>`,
  cup: svg`<path d="M5 1.500h8V7a4 4 0 0 1-8 0zM5 3.500H1V5q0 3.500 4.500 3.500M13 3.500h4V5q0 3.500-4.500 3.500M9 11v5M3.500 16h11"/>`,
  down: svg`<path d="M9 1v11M5.500 8.500 9 12l3.500-3.500M1.500 12.500V15q0 1.500 1.500 1.500h12q1.500 0 1.500-1.500v-2.500"/>`,
  edit: svg`<path d="M1.500 13.500l.5-4L10.500 1l3.500 3.500L5.500 13zM1 17h16"/>`,
};
const sideLink = ([icon, text]: string[]) => html`<li><a href="#"><svg width="18" height="18" viewBox="0 0 18 18" fill="none" stroke="#b7c9cc" stroke-width="1.600" stroke-linejoin="round">${sideIcons[icon]}</svg>${text}</a></li>`;

@customElement("challenge-aside")
class ChallengeAside extends LitElement {
  static styles = [reset, css`
    :host { display: block; width: 280px; flex: none; padding-top: 44px; font: 14px/20px ${sans}; color: #738f93; }
    .facts div { display: flex; justify-content: space-between; height: 29px; align-items: center; font-size: 13px; }
    dd { color: #39424e; }
    .big { font-size: 14px; color: #097bbf; }
    .easy { color: #1ba94c; }
    h3 { letter-spacing: 2px; border-bottom: 1px solid #e7eeef; line-height: 20px; padding: 0 0 4px; }
    .help { margin-top: 16px; }
    .more { margin-top: 20px; }
    .links { padding-top: 10px; color: #097bbf; }
    .links a { display: flex; align-items: center; gap: 11px; height: 36px; padding-left: 1px; }
    .rate { padding-top: 12px; }
    .stars { display: flex; gap: 9px; padding: 10px 4px 0; }
    .social { display: flex; gap: 15px; padding: 16px 5px 0; }
  `];
  render() {
    return html`
      <dl class="facts">
        <div><dt>Author</dt><dd><a class="big" href="#">AvmnuSng</a></dd></div>
        <div><dt>Difficulty</dt><dd class="easy">Easy</dd></div>
        <div><dt>Cutoff Score</dt><dd>15.00</dd></div>
        <div><dt>Max Score</dt><dd>30</dd></div>
        <div><dt>Submitted By</dt><dd><a class="big" href="#">313328</a></dd></div>
      </dl>
      <h3 class="help">NEED HELP?</h3>
      <ul class="links">${[["book", "View tutorial"], ["chat", "View discussions"], ["open", "View editorial"], ["cup", "View top submissions"]].map(sideLink)}</ul>
      <p class="rate">RATE THIS CHALLENGE</p>
      <div class="stars">${[1, 2, 3, 4, 5].map((n) => html`<button aria-label=${`Rate ${n}`}>${star(19)}</button>`)}</div>
      <h3 class="more">MORE DETAILS</h3>
      <ul class="links">${[["down", "Download problem statement"], ["down", "Download sample test cases"], ["edit", "Suggest Edits"]].map(sideLink)}</ul>
      <div class="social">
        <a href="#" aria-label="Facebook"><svg width="20" height="20" viewBox="0 0 20 20"><rect width="20" height="20" rx="1.500" fill="#738f93"/><path d="M13.600 20v-7.700h2.700l.4-3.100h-3.100V7.400q0-1.500 1.500-1.500h1.700V3.100Q16 3 14.500 3q-4 0-4 4v2.200H7.800v3.100h2.700V20z" fill="#f3f7f7"/></svg></a>
        <a href="#" aria-label="Twitter"><svg width="20" height="20" viewBox="0 0 24 24"><path d="M23.600 4.900c-.9.400-1.800.6-2.800.8 1-.6 1.800-1.600 2.200-2.700-1 .6-2 1-3.100 1.200a4.900 4.900 0 0 0-8.400 4.500C7.500 8.500 3.900 6.500 1.500 3.600a4.900 4.900 0 0 0 1.500 6.500c-.8 0-1.600-.2-2.200-.6 0 2.300 1.600 4.400 3.900 4.900-.7.200-1.500.2-2.200.1a4.900 4.900 0 0 0 4.600 3.400A9.900 9.900 0 0 1 0 19.900a13.900 13.900 0 0 0 21.400-12.400c.9-.7 1.700-1.600 2.200-2.600z" fill="#738f93"/></svg></a>
        <a href="#" aria-label="LinkedIn"><svg width="20" height="20" viewBox="0 0 20 20"><rect width="20" height="20" rx="1.500" fill="#738f93"/><path d="M3 7.700h3V17H3zM7.800 7.700h2.800V9q.9-1.500 2.900-1.500 3.500 0 3.500 4V17h-3v-5q0-2-1.600-2-1.700 0-1.700 2v5H7.800z" fill="#f3f7f7"/><circle cx="4.500" cy="4.500" r="1.700" fill="#f3f7f7"/></svg></a>
      </div>`;
  }
}

@customElement("app-root")
class AppRoot extends LitElement {
  static styles = [reset, css`
    :host { display: flex; flex-direction: column; height: 100vh; overflow: hidden; }
    .desktop { display: flex; flex: 1; min-height: 0; }
    .window { flex: 1; min-width: 0; display: flex; flex-direction: column; }
    .view { flex: 1; min-height: 0; display: flex; }
    .page { flex: 1; min-width: 0; background: #f3f7f7; overflow: hidden; }
    .body { width: 1200px; max-width: 100%; margin: 0 auto; padding-top: 29px; display: flex; gap: 30px; }
    .scroll { width: 15px; background: #f1f1f1; display: flex; flex-direction: column; align-items: center; padding: 6px 2px; }
    .thumb { align-self: stretch; height: 38%; margin: 5px 0 auto; background: #c1c1c1; }
  `];
  render() {
    return html`
      <system-bar></system-bar>
      <div class="desktop">
        <app-dock></app-dock>
        <div class="window">
          <browser-chrome></browser-chrome>
          <div class="view">
            <div class="page">
              <site-nav></site-nav>
              <challenge-header></challenge-header>
              <main class="body"><problem-statement></problem-statement><challenge-aside></challenge-aside></main>
            </div>
            <div class="scroll">
              <svg width="8" height="4" viewBox="0 0 8 4"><path d="M0 4 4 0l4 4z" fill="#a3a3a3"/></svg>
              <div class="thumb"></div>
              <svg width="8" height="4" viewBox="0 0 8 4"><path d="M0 0l4 4 4-4z" fill="#505050"/></svg>
            </div>
          </div>
        </div>
      </div>`;
  }
}
